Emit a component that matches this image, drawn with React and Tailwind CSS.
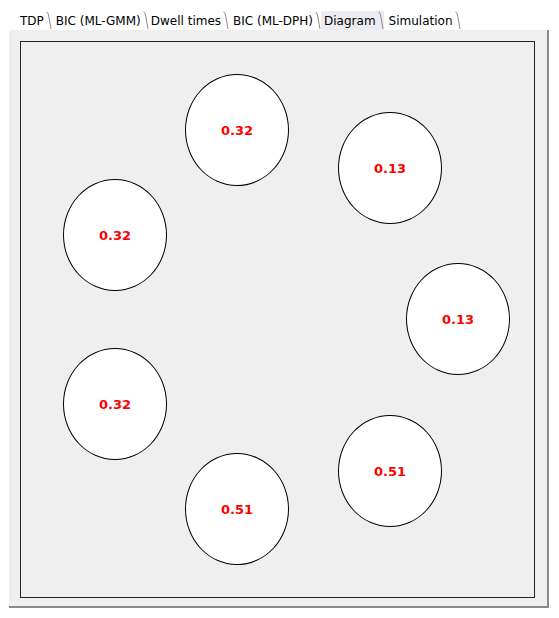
import React from 'react';

const tabs = [
  { label: 'TDP', pl: 'pl-[8px]', pr: 'pr-[2px]' },
  { label: 'BIC (ML-GMM)', pl: 'pl-[4px]', pr: 'pr-[2px]' },
  { label: 'Dwell times', pl: 'pl-[2px]', pr: 'pr-[2px]' },
  { label: 'BIC (ML-DPH)', pl: 'pl-[4px]', pr: 'pr-[2px]' },
  { label: 'Diagram', pl: 'pl-[3px]', pr: 'pr-[2px]', active: true },
  { label: 'Simulation', pl: 'pl-[5px]', pr: 'pr-[2px]' },
];

// node positions on the canvas (relative to the inner box)
const nodes = [
  { x: 164, y: 32, v: '0.32' },
  { x: 317, y: 70, v: '0.13' },
  { x: 42, y: 137, v: '0.32' },
  { x: 385, y: 221, v: '0.13' },
  { x: 42, y: 306, v: '0.32' },
  { x: 317, y: 373, v: '0.51' },
  { x: 164, y: 411, v: '0.51' },
];

function Sep() {
  return (
    <svg width="6" height="19" viewBox="0 0 6 19" className="shrink-0">
      <path d="M0.5 1 Q2 1 2.5 4 L5 18" fill="none" stroke="#8c8c8c" strokeWidth="1" />
    </svg>
  );
}

export default function App() {
  return (
    <div className="w-[559px] h-[618px] bg-white pt-[11px] pl-[9px] font-['DejaVu_Sans',sans-serif]">
      {/* Tabs */}
      <div className="flex items-end h-[19px] pl-[3px]">
        {tabs.map((t) => (
          <div
            key={t.label}
            className={`flex items-end h-[19px] ${t.active ? 'bg-[#ecebf2]' : 'h-[17px]'}`}
          >
            <span className={`${t.pl} ${t.pr} text-[12px] leading-[17px] text-black whitespace-nowrap`}>
              {t.label}
            </span>
            <Sep />
          </div>
        ))}
      </div>

      {/* Panel */}
      <div className="w-[540px] h-[578px] bg-[#efefef] border-r-2 border-b-2 border-[#8a8a8a] pt-[11px] pl-[11px]">
        <div className="relative w-[515px] h-[557px] border border-[#222]">
          {nodes.map((n, i) => (
            <div
              key={i}
              className="absolute w-[104px] h-[112px] rounded-[50%] bg-white border border-black flex items-center justify-center pt-[2px]"
              style={{ left: n.x, top: n.y }}
            >
              <span className="text-[13px] font-bold text-[#ff0000]">{n.v}</span>
            </div>
          ))}
        </div>
      </div>
    </div>
  );
}
